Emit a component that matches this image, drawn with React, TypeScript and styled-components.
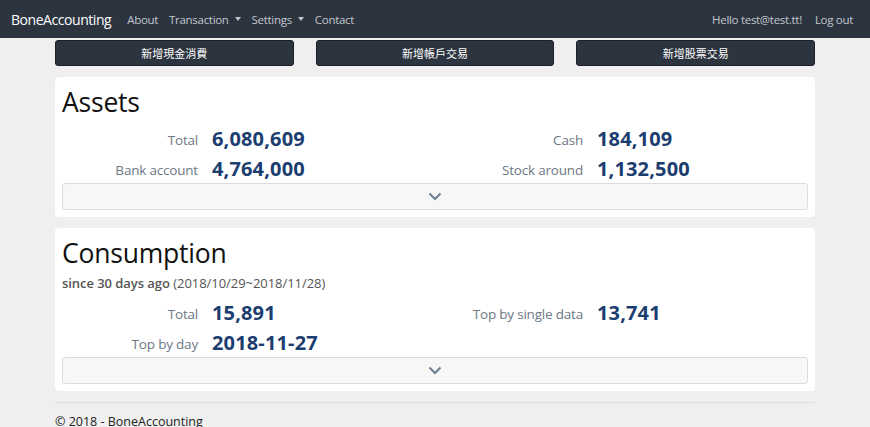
import React from "react";
import styled, { createGlobalStyle } from "styled-components";

const Global = createGlobalStyle`
  html, body { margin: 0; padding: 0; }
  body {
    background: #efefef;
    font-family: "Open Sans", "Noto Sans", "Noto Sans CJK TC", sans-serif;
    color: #222;
  }
`;

const Navbar = styled.nav`
  height: 38px;
  background: #2c3440;
  display: flex;
  align-items: center;
  padding: 0 17px 0 11px;
`;

const Brand = styled.a`
  color: #fff;
  font-size: 14px;
  margin-right: 16px;
  letter-spacing: -0.45px;
`;

const NavLinks = styled.div`
  display: flex;
  align-items: center;
  gap: 11px;
  flex: 1;
`;

const NavLink = styled.a`
  color: #c3c6cb;
  font-size: 11.5px;
  display: flex;
  align-items: center;
  letter-spacing: -0.3px;
`;

const Caret = styled.span`
  display: inline-block;
  margin-left: 6px;
  width: 0;
  height: 0;
  border-left: 3.5px solid transparent;
  border-right: 3.5px solid transparent;
  border-top: 4px solid #c3c6cb;
`;

const NavRight = styled.div`
  display: flex;
  align-items: center;
  gap: 13px;
`;

const Container = styled.main`
  width: 760px;
  margin: 0 auto;
`;

const ActionRow = styled.div`
  display: grid;
  grid-template-columns: repeat(3, 1fr);
  column-gap: 22px;
  padding-top: 2px;
`;

const ActionButton = styled.button`
  height: 26px;
  background: #2c3440;
  border: 1px solid #1b2028;
  border-radius: 3px;
  color: #fff;
  font-family: "Noto Sans CJK TC", sans-serif;
  font-size: 11px;
  padding: 0;
`;

const Card = styled.section`
  background: #fff;
  border-radius: 4px;
  margin-top: 11px;
  padding: 8px 7px 7px;
`;

const Title = styled.h2`
  margin: 0;
  font-size: 26.5px;
  font-weight: 400;
  line-height: 34px;
  color: #111;
  letter-spacing: -0.2px;
`;

const Subtitle = styled.div`
  font-size: 13px;
  color: #555;
  margin-top: 4px;
  letter-spacing: -0.05px;
`;

const Strong = styled.span`
  font-weight: 600;
`;

const StatGrid = styled.div<{ $top: number }>`
  display: grid;
  grid-template-columns: 136px 209px 148px 1fr;
  column-gap: 14px;
  grid-auto-rows: 30px;
  align-items: center;
  margin-top: ${(p) => p.$top}px;
`;

const Label = styled.div`
  text-align: right;
  font-size: 13.5px;
  color: #6d7785;
  padding-top: 4px;
  white-space: nowrap;
  letter-spacing: -0.2px;
`;

const Value = styled.div`
  font-size: 20px;
  font-weight: 700;
  color: #1b3d6f;
  white-space: nowrap;
  letter-spacing: 0.15px;
`;

const Toggle = styled.button`
  display: flex;
  width: 100%;
  height: 27px;
  align-items: center;
  justify-content: center;
  background: #f7f7f7;
  border: 1px solid #dcdcdc;
  border-radius: 3px;
  padding: 0;
`;

const Rule = styled.hr`
  border: 0;
  border-top: 1px solid #dedede;
  margin: 11px 0 0;
`;

const Footer = styled.footer`
  font-size: 12.5px;
  color: #222;
  padding-top: 10px;
`;

const Chevron = () => (
  <svg width="14" height="9" viewBox="0 0 14 9">
    <path d="M1.5 1.5 L7 7 L12.5 1.5" fill="none" stroke="#6e7d8c" strokeWidth="2" />
  </svg>
);

type Stat = [string, string];

const Stats = ({ rows, top }: { rows: Stat[][]; top: number }) => (
  <StatGrid $top={top}>
    {rows.map((row, i) =>
      row.map(([l, v], j) => (
        <React.Fragment key={`${i}-${j}`}>
          <Label>{l}</Label>
          <Value>{v}</Value>
        </React.Fragment>
      ))
    )}
  </StatGrid>
);

export default function App() {
  return (
    <>
      <Global />
      <Navbar>
        <Brand>BoneAccounting</Brand>
        <NavLinks>
          <NavLink>About</NavLink>
          <NavLink>
            Transaction<Caret />
          </NavLink>
          <NavLink>
            Settings<Caret />
          </NavLink>
          <NavLink>Contact</NavLink>
        </NavLinks>
        <NavRight>
          <NavLink>Hello test@test.tt!</NavLink>
          <NavLink>Log out</NavLink>
        </NavRight>
      </Navbar>
      <Container>
        <ActionRow>
          <ActionButton>新增現金消費</ActionButton>
          <ActionButton>新增帳戶交易</ActionButton>
          <ActionButton>新增股票交易</ActionButton>
        </ActionRow>
        <Card>
          <Title>Assets</Title>
          <Stats
            top={4}
            rows={[
              [
                ["Total", "6,080,609"],
                ["Cash", "184,109"],
              ],
              [
                ["Bank account", "4,764,000"],
                ["Stock around", "1,132,500"],
              ],
            ]}
          />
          <Toggle>
            <Chevron />
          </Toggle>
        </Card>
        <Card>
          <Title>Consumption</Title>
          <Subtitle>
            <Strong>since 30 days ago</Strong> (2018/10/29~2018/11/28)
          </Subtitle>
          <Stats
            top={5}
            rows={[
              [
                ["Total", "15,891"],
                ["Top by single data", "13,741"],
              ],
              [
                ["Top by day", "2018-11-27"],
                ["", ""],
              ],
            ]}
          />
          <Toggle>
            <Chevron />
          </Toggle>
        </Card>
        <Rule />
        <Footer>© 2018 - BoneAccounting</Footer>
      </Container>
    </>
  );
}
